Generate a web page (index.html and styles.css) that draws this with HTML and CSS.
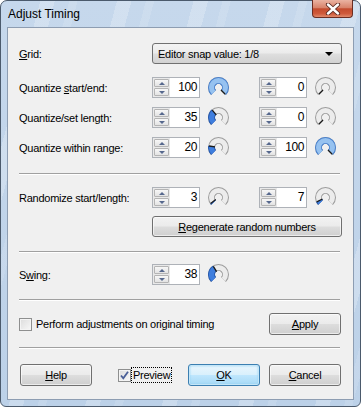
FILE: index.html
```html
<!DOCTYPE html>
<html lang="en">
<head>
    <meta charset="UTF-8">
    <title>Adjust Timing</title>
    <link rel="stylesheet" href="styles.css">
</head>
<body>
    <svg class="defs" width="0" height="0">
        <symbol id="ring" viewBox="0 0 21 21">
            <path d="M5.55 15.45A7 7 0 1 1 15.45 15.45" fill="none" stroke="#9c9c9c" stroke-width="7"/>
            <path d="M5.55 15.45A7 7 0 1 1 15.45 15.45" fill="none" stroke="#ececec" stroke-width="5"/>
        </symbol>
    </svg>

    <div class="window">
        <div class="titlebar">
            <span class="title">Adjust Timing</span>
            <div class="close">
                <svg width="16" height="12" viewBox="0 0 16 12">
                    <path d="M3 1.5L13 10.5M13 1.5L3 10.5" stroke="#5a2a22" stroke-width="4.2" stroke-linecap="round"/>
                    <path d="M3 1.5L13 10.5M13 1.5L3 10.5" stroke="#fff" stroke-width="2.4" stroke-linecap="round"/>
                </svg>
            </div>
        </div>

        <div class="client">
            <div class="row">
                <span class="label"><u>G</u>rid:</span>
                <div class="combo">
                    <span>Editor snap value: 1/8</span>
                    <span class="combo-arrow"></span>
                </div>
            </div>

            <!-- quantize block -->
            <div class="row first">
                <span class="label">Quantize <u>s</u>tart/end:</span>
                <div class="spin"><div class="spin-btns"><b class="up"></b><b class="down"></b></div><span class="val">100</span></div>
                <svg class="knob" viewBox="0 0 21 21"><use href="#ring"/><path class="arc-edge full" d="M5.55 15.45A7 7 0 1 1 15.45 15.45"/><path class="arc full" d="M5.55 15.45A7 7 0 1 1 15.45 15.45"/><line class="needle" x1="12.98" y1="12.98" x2="17.2" y2="17.2"/></svg>
                <div class="spin second"><div class="spin-btns"><b class="up"></b><b class="down"></b></div><span class="val">0</span></div>
                <svg class="knob" viewBox="0 0 21 21"><use href="#ring"/><line class="needle" x1="8.03" y1="12.98" x2="3.8" y2="17.2"/></svg>
            </div>
            <div class="row">
                <span class="label">Quantize/set length:</span>
                <div class="spin"><div class="spin-btns"><b class="up"></b><b class="down"></b></div><span class="val">35</span></div>
                <svg class="knob" viewBox="0 0 21 21"><use href="#ring"/><path class="arc-edge" d="M5.55 15.45A7 7 0 0 1 5.95 5.18"/><path class="arc" d="M5.55 15.45A7 7 0 0 1 5.95 5.18"/><line class="needle" x1="8.23" y1="7.84" x2="4.3" y2="3.2"/></svg>
                <div class="spin second"><div class="spin-btns"><b class="up"></b><b class="down"></b></div><span class="val">0</span></div>
                <svg class="knob" viewBox="0 0 21 21"><use href="#ring"/><line class="needle" x1="8.03" y1="12.98" x2="3.8" y2="17.2"/></svg>
            </div>
            <div class="row">
                <span class="label">Quantize within range:</span>
                <div class="spin"><div class="spin-btns"><b class="up"></b><b class="down"></b></div><span class="val">20</span></div>
                <svg class="knob" viewBox="0 0 21 21"><use href="#ring"/><path class="arc-edge" d="M5.55 15.45A7 7 0 0 1 3.59 9.41"/><path class="arc" d="M5.55 15.45A7 7 0 0 1 3.59 9.41"/><line class="needle" x1="7.04" y1="9.95" x2="1" y2="9"/></svg>
                <div class="spin second"><div class="spin-btns"><b class="up"></b><b class="down"></b></div><span class="val">100</span></div>
                <svg class="knob" viewBox="0 0 21 21"><use href="#ring"/><path class="arc-edge full" d="M5.55 15.45A7 7 0 1 1 15.45 15.45"/><path class="arc full" d="M5.55 15.45A7 7 0 1 1 15.45 15.45"/><line class="needle" x1="12.98" y1="12.98" x2="17.2" y2="17.2"/></svg>
            </div>

            <div class="sep sep-a"></div>

            <div class="row">
                <span class="label">Randomize start/length:</span>
                <div class="spin"><div class="spin-btns"><b class="up"></b><b class="down"></b></div><span class="val">3</span></div>
                <svg class="knob" viewBox="0 0 21 21"><use href="#ring"/><path class="arc-edge" d="M5.55 15.45A7 7 0 0 1 4.9 14.7"/><path class="arc" d="M5.55 15.45A7 7 0 0 1 4.9 14.7"/><line class="needle" x1="7.7" y1="12.6" x2="2.7" y2="16.4"/></svg>
                <div class="spin second"><div class="spin-btns"><b class="up"></b><b class="down"></b></div><span class="val">7</span></div>
                <svg class="knob" viewBox="0 0 21 21"><use href="#ring"/><path class="arc-edge" d="M5.55 15.45A7 7 0 0 1 4.21 13.58"/><path class="arc" d="M5.55 15.45A7 7 0 0 1 4.21 13.58"/><line class="needle" x1="7.36" y1="12.04" x2="1.8" y2="14.8"/></svg>
            </div>
            <div class="row regen-row">
                <button class="btn regen"><u>R</u>egenerate random numbers</button>
            </div>

            <div class="sep sep-b"></div>

            <div class="row swing-row">
                <span class="label">S<u>w</u>ing:</span>
                <div class="spin"><div class="spin-btns"><b class="up"></b><b class="down"></b></div><span class="val">38</span></div>
                <svg class="knob" viewBox="0 0 21 21"><use href="#ring"/><path class="arc-edge" d="M5.55 15.45A7 7 0 0 1 6.75 4.59"/><path class="arc" d="M5.55 15.45A7 7 0 0 1 6.75 4.59"/><line class="needle" x1="8.62" y1="7.54" x2="5.3" y2="2.3"/></svg>
            </div>

            <div class="sep sep-c"></div>

            <div class="row apply-row">
                <span class="check"></span>
                <span class="check-label">Perform adjustments on original timing</span>
                <button class="btn apply"><u>A</u>pply</button>
            </div>

            <div class="sep sep-d"></div>

            <div class="row footer">
                <button class="btn help"><u>H</u>elp</button>
                <span class="check checked">
                    <svg width="11" height="11" viewBox="0 0 11 11"><path d="M2 5.5L4.3 8.3L9 1.8" fill="none" stroke="#4a5f97" stroke-width="1.8"/></svg>
                </span>
                <span class="focus">Preview</span>
                <button class="btn ok"><u>O</u>K</button>
                <button class="btn cancel"><u>C</u>ancel</button>
            </div>
        </div>
    </div>
</body>
</html>
```

FILE: styles.css
```css
body {
    margin: 0;
    font-family: "Liberation Sans", Arial, sans-serif;
    font-size: 11px;
    letter-spacing: -0.25px;
    color: #000;
    background: #fff;
}
.defs { display: block; height: 0; }

.window {
    width: 361px;
    height: 407px;
    box-sizing: border-box;
    border: 1px solid #4b5a6c;
    border-radius: 7px 7px 6px 6px;
    padding: 0 6px 6px 6px;
    background:
        repeating-linear-gradient(105deg, rgba(255,255,255,0) 0 38px, rgba(255,255,255,0.22) 38px 52px, rgba(255,255,255,0) 52px 66px, rgba(255,255,255,0.12) 66px 74px),
        linear-gradient(180deg, #c6d8ec 0%, #bcd1e8 100%);
}
.titlebar {
    height: 26px;
    display: flex;
    justify-content: space-between;
    align-items: flex-start;
    padding-left: 1px;
}
.title {
    font-size: 12px;
    line-height: 12px;
    letter-spacing: 0;
    margin-top: 7px;
}
.close {
    width: 41px;
    height: 18px;
    box-sizing: border-box;
    margin-right: 1px;
    margin-top: -1px;
    border: 1px solid #6b2d22;
    border-top: none;
    border-radius: 0 0 4px 4px;
    background: linear-gradient(180deg, #eab3a2 0%, #d8836b 45%, #c34b2e 52%, #cf5a3b 80%, #e08a6c 100%);
    display: flex;
    align-items: center;
    justify-content: center;
}

.client {
    height: 373px;
    box-sizing: border-box;
    border: 1px solid #8d9db2;
    background: #f0f0f0;
    padding: 15px 11px 13px 11px;
}
.row {
    display: flex;
    align-items: center;
    height: 21px;
    margin-top: 9px;
}
.row:first-child { margin-top: 0; }
.row.first { margin-top: 13px; }
.label {
    width: 133px;
    flex: none;
    white-space: nowrap;
}

.combo {
    flex: 1;
    height: 21px;
    box-sizing: border-box;
    border: 1px solid #707070;
    border-radius: 3px;
    background: linear-gradient(180deg, #f3f3f3 0%, #ebebeb 48%, #dedede 52%, #d2d2d2 100%);
    display: flex;
    align-items: center;
    justify-content: space-between;
    padding: 0 8px 0 5px;
}
.combo-arrow {
    width: 0;
    height: 0;
    border-left: 4px solid transparent;
    border-right: 4px solid transparent;
    border-top: 4px solid #000;
}

.spin {
    width: 48px;
    height: 21px;
    flex: none;
    box-sizing: border-box;
    border: 1px solid #aeb2b8;
    background: #fff;
    display: flex;
}
.spin.second { margin-left: 30px; }
.spin-btns {
    width: 17px;
    display: flex;
    flex-direction: column;
    background: #e9e9e9;
    padding: 1px;
    gap: 1px;
    box-sizing: border-box;
}
.spin-btns b {
    flex: 1;
    border: 1px solid #b4b4b4;
    border-radius: 1px;
    background: linear-gradient(180deg, #f7f7f7, #e3e3e3);
    display: flex;
    align-items: center;
    justify-content: center;
}
.spin-btns b::after {
    content: "";
    border-left: 3px solid transparent;
    border-right: 3px solid transparent;
}
.spin-btns .up::after { border-bottom: 3px solid #56688d; }
.spin-btns .down::after { border-top: 3px solid #56688d; }
.val {
    flex: 1;
    text-align: right;
    padding-right: 2px;
    font-size: 12px;
    letter-spacing: -0.4px;
    line-height: 19px;
}

.knob {
    width: 21px;
    height: 21px;
    margin-left: 8px;
    flex: none;
}
.arc-edge { fill: none; stroke: #2a5caf; stroke-width: 7; }
.arc { fill: none; stroke: #3f7ede; stroke-width: 5; }
.arc-edge.full { stroke: #4a82cf; }
.arc.full { stroke: #96c2f0; }
.needle { stroke: #1a1a1a; stroke-width: 1.3; }

.sep {
    height: 0;
    border-top: 1px solid #a0a0a0;
    border-bottom: 1px solid #fff;
    margin-right: 2px;
}
.sep-a { margin-top: 15px; margin-bottom: 12px; }
.sep-b { margin-top: 14px; margin-bottom: 11px; }
.sep-c { margin-top: 14px; margin-bottom: 12px; }
.sep-d { margin-top: 12px; margin-bottom: 15px; }
.sep + .row { margin-top: 0; }
.regen-row { margin-top: 8px; }

.btn {
    height: 21px;
    box-sizing: border-box;
    border: 1px solid #707070;
    border-radius: 3px;
    background: linear-gradient(180deg, #f2f2f2 0%, #ebebeb 48%, #dddddd 52%, #cfcfcf 100%);
    box-shadow: inset 0 0 0 1px rgba(255,255,255,0.6);
    font-family: inherit;
    font-size: 11px;
    letter-spacing: inherit;
    color: #000;
    padding: 0;
}
.regen { margin-left: 133px; flex: 1; margin-right: 0; }
.apply-row, .footer { height: 22px; }
.apply-row .btn, .footer .btn { height: 22px; width: 72px; }

.check {
    width: 13px;
    height: 13px;
    box-sizing: border-box;
    border: 1px solid #8e8f8f;
    background: linear-gradient(135deg, #dcdcdc, #f8f8f8);
    box-shadow: inset 0 0 0 1px #f4f4f4;
    flex: none;
    display: flex;
    align-items: center;
    justify-content: center;
}
.check-label { margin-left: 4px; }
.apply { margin-left: auto; margin-right: 1px; }

.help { margin-left: 1px; }
.checked { margin-left: 26px; }
.focus {
    margin-left: 1px;
    outline: 1px dotted #000;
    padding: 0 1px;
    line-height: 14px;
}
.ok {
    margin-left: auto;
    border-color: #3c7fb1;
    background: linear-gradient(180deg, #eaf6fd 0%, #d9f0fc 48%, #bee6fd 52%, #a7d9f5 100%);
    box-shadow: inset 0 0 0 1px #c4e6f8, inset 0 0 2px 1px #8fd0f3;
}
.cancel { margin-left: 9px; margin-right: 1px; }
```
